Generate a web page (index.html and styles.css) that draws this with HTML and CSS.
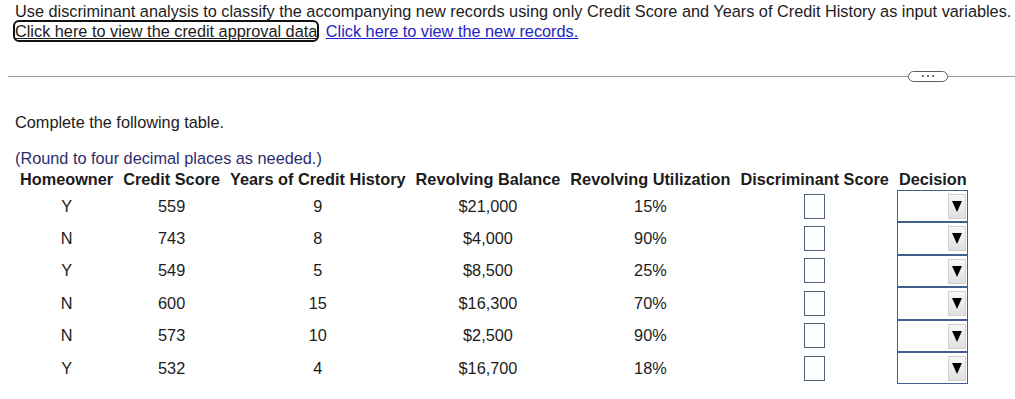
FILE: index.html
```html
<!DOCTYPE html>
<html>
<head>
<meta charset="utf-8">
<link rel="stylesheet" href="styles.css">
</head>
<body>
<div class="intro">
  <p class="q">Use discriminant analysis to classify the accompanying new records using only Credit Score and Years of Credit History as input variables.</p>
  <p class="links"><a class="lnk focus" href="#">Click here to view the credit approval data</a> <a class="lnk" href="#">Click here to view the new records.</a></p>
</div>
<div class="divider">
  <div class="rule"></div>
  <div class="pill"><span></span><span></span><span></span></div>
  <div class="rule tail"></div>
</div>
<div class="work">
  <p class="instr">Complete the following table.</p>
  <p class="round">(Round to four decimal places as needed.)</p>
  <table class="grid">
    <thead>
      <tr><th>Homeowner</th><th>Credit Score</th><th>Years of Credit History</th><th>Revolving Balance</th><th>Revolving Utilization</th><th>Discriminant Score</th><th>Decision</th></tr>
    </thead>
    <tbody>
      <tr><td>Y</td><td>559</td><td>9</td><td>$21,000</td><td>15%</td><td><div class="box"></div></td><td><div class="sel"><div class="arr"><i></i></div></div></td></tr>
      <tr><td>N</td><td>743</td><td>8</td><td>$4,000</td><td>90%</td><td><div class="box"></div></td><td><div class="sel"><div class="arr"><i></i></div></div></td></tr>
      <tr><td>Y</td><td>549</td><td>5</td><td>$8,500</td><td>25%</td><td><div class="box"></div></td><td><div class="sel"><div class="arr"><i></i></div></div></td></tr>
      <tr><td>N</td><td>600</td><td>15</td><td>$16,300</td><td>70%</td><td><div class="box"></div></td><td><div class="sel"><div class="arr"><i></i></div></div></td></tr>
      <tr><td>N</td><td>573</td><td>10</td><td>$2,500</td><td>90%</td><td><div class="box"></div></td><td><div class="sel"><div class="arr"><i></i></div></div></td></tr>
      <tr><td>Y</td><td>532</td><td>4</td><td>$16,700</td><td>18%</td><td><div class="box"></div></td><td><div class="sel"><div class="arr"><i></i></div></div></td></tr>
    </tbody>
  </table>
</div>
</body>
</html>
```
FILE: styles.css
```css
html, body { margin: 0; padding: 0; background: #fff; }
body { font-family: "Liberation Sans", Arial, sans-serif; font-size: 16.3px; color: #1c1c1c; }
p { margin: 0; }
.intro { padding: 1px 0 0 15px; }
.q, .links { line-height: 20px; }
.lnk { color: #2424c4; text-decoration: underline; }
.focus { color: #1c1c1c; outline: 2px solid #111; outline-offset: 0; border-radius: 4px; margin-right: 4px; }
.divider { display: flex; align-items: center; margin: 29px 0 0 8px; height: 12px; }
.rule { height: 1px; background: #9a9a9a; width: 900px; }
.rule.tail { flex: 1; width: auto; }
.pill { width: 38px; height: 9px; border: 1px solid #555d66; border-radius: 6px; display: flex; justify-content: center; align-items: center; gap: 3px; background: #fff; }
.pill span { width: 2px; height: 2px; background: #444; border-radius: 1px; }
.work { padding-left: 15px; }
.instr { margin-top: 30px; line-height: 20px; }
.round { margin-top: 16px; margin-bottom: 2px; line-height: 20px; color: #2d2d6e; }
.grid { border-collapse: collapse; margin-left: 0; }
.grid th { font-weight: bold; padding: 0 5px 2px; line-height: 18px; white-space: nowrap; }
.grid td { text-align: center; padding: 0; height: 32.4px; vertical-align: middle; }
.box { width: 19px; height: 23px; border: 1px solid #4f6178; margin: 0 auto; }
.sel { width: 69px; height: 30.4px; border: 1px solid #3f5f8f; margin: 0 auto; position: relative; background: #fff; }
.arr { position: absolute; right: 1px; top: 3px; width: 16px; height: 23px; border: 1px solid #d0d0d0; background: linear-gradient(#f8f8f8, #e0e0e0); display: flex; align-items: center; justify-content: center; }
.arr i { width: 0; height: 0; border-left: 5px solid transparent; border-right: 5px solid transparent; border-top: 11px solid #000; }
```
